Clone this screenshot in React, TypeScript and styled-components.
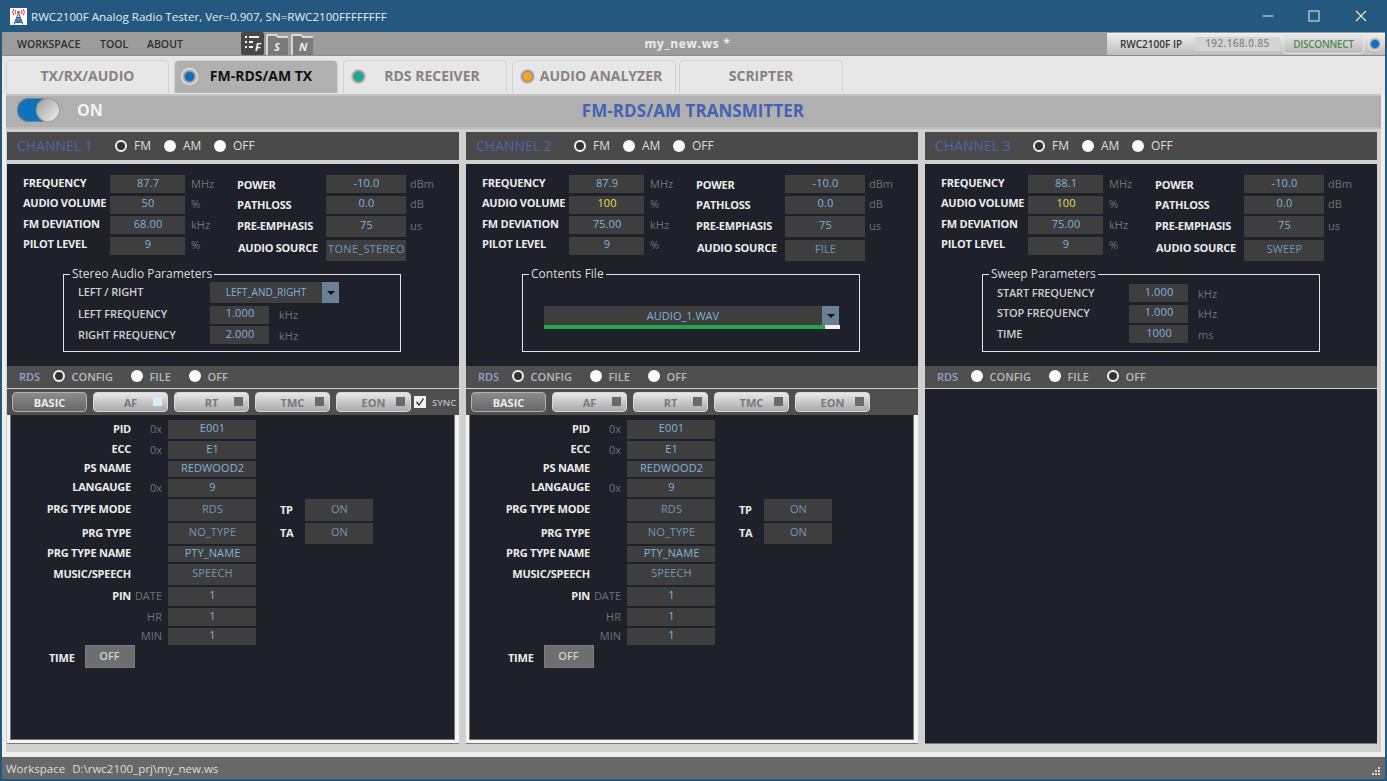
import React from "react";
import styled, { createGlobalStyle } from "styled-components";

const Global = createGlobalStyle`
  html, body { margin: 0; padding: 0; height: 100%; overflow: hidden; background: #d0d0ce; }
  #root { height: 100%; }
  * { box-sizing: border-box; }
  body { font-family: "Open Sans", "Noto Sans", "Liberation Sans", sans-serif; }
`;

const Win = styled.div`
  width: 1387px; height: 781px; display: flex; flex-direction: column; background: #24587f;
  padding: 0 2px 2px 2px;
`;
const TitleBar = styled.header`
  height: 32px; flex: none; display: flex; align-items: center; padding-left: 8px; color: #e4ebf1;
  font-size: 11.6px;
`;
const TitleText = styled.span` margin-left: 4px; white-space: nowrap; `;
const WinControls = styled.div` margin-left: auto; display: flex; padding-right: 1px; `;
const WinControl = styled.span`
  width: 46.5px; height: 32px; display: flex; align-items: center; justify-content: center;
`;

const MenuBar = styled.nav`
  height: 24px; flex: none; display: grid; grid-template-columns: 1fr auto 1fr; align-items: stretch;
  background: #9c9c9c; border-bottom: 1px solid #8c8c8c;
`;
const MenuLeft = styled.div` display: flex; align-items: center; padding-left: 15px; `;
const MenuItem = styled.span<{ $w: number }>`
  width: ${p => p.$w}px; font-size: 10.5px; color: #2e2e2e; font-weight: 600; white-space: nowrap;
`;
const ToolIcons = styled.div` display: flex; gap: 2px; margin-left: 47px; height: 23px; `;
const FileName = styled.div`
  align-self: center; color: #ececec; font-size: 12px; font-weight: 700; margin-right: 12px; white-space: nowrap; letter-spacing: 0.7px;
`;
const MenuRight = styled.div`
  justify-self: end; display: flex; align-items: center; width: 278px; height: 22px; margin-top: 1px; padding-left: 0;
  background: linear-gradient(#efefef, #bdbdbd);
`;
const IpLabel = styled.span`
  width: 88px; text-align: center; font-size: 10px; font-weight: 600; color: #333; white-space: nowrap;
`;
const IpValue = styled.span`
  width: 85px; height: 14px; line-height: 13px; background: #d4d4d4; color: #888; font-size: 10px; font-weight: 600; text-align: center; letter-spacing: 0.4px;
`;
const Disconnect = styled.button`
  width: 81px; height: 20px; margin-left: 3px; border: 1px solid #e4e4e4; border-radius: 4px; padding: 0;
  background: linear-gradient(#e6e6e6, #bcbcbc); color: #4f8a4f; font: 600 10px "Open Sans", sans-serif; letter-spacing: -0.3px;
`;
const Led = styled.span`
  width: 14px; height: 14px; margin-left: 4px; border-radius: 50%; flex: none;
  background: radial-gradient(circle, #0f6fc0 0 3.6px, #9a9a9a 4.2px, #f0f0f0 7px);
`;

const TabStrip = styled.div`
  height: 38px; flex: none; display: flex; padding: 4px 0 0 4px; background: #e6e7e6;
`;
const Tab = styled.div<{ $active?: boolean; $w: number; $offset?: number; $gap?: number }>`
  position: relative; width: ${p => p.$w}px; height: 33px; margin-right: ${p => p.$gap ?? 5}px;
  border: 1px solid #d2d2d2; border-bottom: none; border-radius: 5px 5px 0 0;
  background: ${p => (p.$active ? "#b0b0b0" : "#e6e7e6")};
  color: ${p => (p.$active ? "#111" : "#888380")};
  font-size: 14px; font-weight: 700; display: flex; align-items: center; justify-content: center;
  padding: 0 0 3px ${p => p.$offset ?? 0}px; white-space: nowrap;
`;
const TabDot = styled.span<{ $c: string }>`
  position: absolute; left: 6px; top: 7px; width: 17px; height: 17px; border-radius: 50%;
  background: radial-gradient(circle, ${p => p.$c} 0 4.2px, #8e8e8e 5px, #f4f4f4 8.5px);
`;

const Content = styled.main`
  flex: 1; min-height: 0; display: flex; flex-direction: column; background: #d0d0ce;
  padding: 0 4px 0 4px; border-left: 0; box-shadow: inset 4px 0 0 #eeeeec, inset -4px 0 0 #eeeeec;
`;
const HeaderBar = styled.div`
  height: 35px; flex: none; display: grid; grid-template-columns: 1fr auto 1fr; align-items: center;
  background: #b0b0b0; border-top: 2px solid #c4c4c4; border-bottom: 2px solid #bcbcbc; padding: 0 0 3px 11px;
`;
const ToggleWrap = styled.div` display: flex; align-items: center; `;
const Toggle = styled.div`
  width: 43px; height: 24px; border-radius: 12px; background: #0f72bd; box-shadow: inset 0 0 0 1px #7f7f7f; display: flex; justify-content: flex-end;
`;
const Knob = styled.span`
  width: 24px; height: 24px; border-radius: 50%; background: linear-gradient(135deg, #9a9a9a, #f4f4f4); box-shadow: 0 0 0 1px #9a9a9a inset;
`;
const ToggleLabel = styled.span` margin-left: 17px; font-size: 16px; font-weight: 700; color: #f4f4f4; `;
const PageTitle = styled.h1`
  margin: 0 12px 0 0; font-size: 17px; font-weight: 700; color: #4463b4; letter-spacing: 0.05px; white-space: nowrap;
`;

const Columns = styled.div`
  flex: 1; min-height: 0; display: grid; grid-template-columns: repeat(3, 452px); gap: 7px; padding: 3px 0 0 1px;
`;
const Column = styled.section`
  display: flex; flex-direction: column; background: #1e2129; border-bottom: 1px solid #777; height: 612px;
`;
const ChannelHead = styled.div`
  height: 28px; flex: none; display: flex; align-items: center; background: #4a4a4a; padding: 0 0 1px 10px;
`;
const ChannelName = styled.span`
  width: 98px; color: #4a66ad; font-size: 14px; white-space: nowrap;
`;
const HeadRule = styled.div` height: 4px; flex: none; background: #d0d0ce; `;
const Option = styled.label<{ $w: number }>`
  width: ${p => p.$w}px; display: flex; align-items: center; gap: 7px; color: #dedede; font-size: 12px; white-space: nowrap;
`;
const Radio = styled.span<{ $on?: boolean }>`
  width: 12px; height: 12px; border-radius: 50%; flex: none;
  background: ${p => (p.$on ? "#333" : "#fafafa")};
  border: ${p => (p.$on ? "2px solid #f2f2f2" : "none")};
`;

const Settings = styled.div`
  height: 202px; flex: none; display: flex; flex-direction: column; padding-top: 11px;
`;
const TopGrids = styled.div` display: flex; height: 92px; padding-left: 16px; `;
const LeftGrid = styled.div`
  width: 214px; display: grid; grid-template-columns: 87px 75px 1fr; grid-auto-rows: 18px; row-gap: 2.5px; align-items: center;
`;
const RightGrid = styled.div`
  display: grid; grid-template-columns: 89px 80px 1fr; grid-template-rows: 18px 18px 21px 21px; row-gap: 2.5px; align-items: center;
`;
const Label = styled.span<{ $dx?: number; $dy?: number }>`
  font-size: 11px; font-weight: 700; color: #ececec; white-space: nowrap; letter-spacing: -0.25px;
  margin-left: ${p => p.$dx ?? 0}px; position: relative; top: ${p => p.$dy ?? 0}px;
`;
const Value = styled.span<{ $tone?: "normal" | "dim" | "yellow"; $wide?: boolean }>`
  height: 100%; display: flex; align-items: center; justify-content: center; background: #3e3e3e; padding: 0 0 4px 1px;
  font-size: 11px; letter-spacing: ${p => (p.$wide ? "0.3px" : "0.1px")}; white-space: nowrap; overflow: hidden;
  color: ${p => (p.$tone === "yellow" ? "#e6d95e" : p.$tone === "dim" ? "#6f97b4" : "#7fb3da")};
`;
const Unit = styled.span`
  font-size: 11px; color: #6e7276; margin-left: 6px; white-space: nowrap; position: relative; top: -1px;
`;
const PowerUnit = styled(Unit)` margin-left: 4px; `;

const Group = styled.fieldset<{ $x: number }>`
  width: 338px; height: 85px; margin: 0 0 0 ${p => p.$x}px; padding: 0 0 0 14px; border: 1px solid #e4e4e4; min-inline-size: 0;
`;
const GroupTitle = styled.legend`
  margin-left: -8px; padding: 0 2px; font-size: 12px; line-height: 14px; color: #dcdcdc; white-space: nowrap;
`;
const GroupGrid = styled.div<{ $rows: string; $top: number }>`
  display: grid; grid-template-columns: 132px 59px 1fr; grid-template-rows: ${p => p.$rows}; row-gap: 2.5px; align-items: center; margin-top: ${p => p.$top}px;
`;
const GroupLabel = styled.span` font-size: 11px; font-weight: 600; color: #cfcfcf; white-space: nowrap; letter-spacing: -0.15px; position: relative; top: -1px; `;
const GroupUnit = styled(Unit)` margin-left: 10px; top: 0; `;
const Combo = styled.div<{ $w: number }>`
  width: ${p => p.$w}px; height: 100%; display: flex; background: #3e3e3e;
`;
const ComboText = styled.span<{ $size: number }>`
  flex: 1; display: flex; align-items: center; justify-content: center; color: #7fb3da; font-size: ${p => p.$size}px; padding-bottom: 1px; white-space: nowrap;
`;
const ComboArrow = styled.span`
  width: 17px; flex: none; background: #6a8096; display: flex; align-items: center; justify-content: center;
  &::after { content: ""; border: 4px solid transparent; border-top: 4px solid #111; border-bottom: none; }
`;
const FileWrap = styled.div` margin: 25px 0 0 7px; width: 296px; `;
const FileCombo = styled(Combo)` height: 19px; `;
const Track = styled.div` height: 4px; background: #f0f0f0; `;
const Fill = styled.div` height: 100%; background: #22a84a; `;

const RdsBar = styled.div`
  height: 23px; flex: none; display: flex; align-items: center; padding: 0 0 2px 12px; background: #4f4f4f; border-bottom: 1px solid #cfcfcf;
`;
const RdsName = styled.span` width: 34px; color: #8fa3c9; font-size: 11px; font-weight: 600; `;
const RdsOption = styled(Option)` font-size: 11px; color: #b8b8b8; font-weight: 600; gap: 6.5px; `;

const SubBar = styled.div`
  height: 26px; flex: none; display: flex; align-items: center; gap: 6px; padding: 0 0 0 5px; background: #4f4f4f;
`;
const SubTab = styled.button<{ $active?: boolean }>`
  position: relative; width: 75px; height: 20px; padding: 0; border-radius: 4px; border: 1px solid ${p => (p.$active ? "#b0b0b0" : "#d8d8d8")};
  background: ${p => (p.$active ? "linear-gradient(#8c8c8c, #666)" : "linear-gradient(#e8e8e8, #a8a8a8)")};
  color: ${p => (p.$active ? "#ececec" : "#7a7a7a")}; font: 700 11px "Open Sans", sans-serif;
`;
const SubLamp = styled.span<{ $on?: boolean }>`
  position: absolute; right: 5px; top: 4px; width: 9px; height: 9px; background: ${p => (p.$on ? "#d8ecf4" : "#6a6a6a")};
`;
const Sync = styled.label`
  display: flex; align-items: center; gap: 6px; margin-left: -3px; color: #b8b8b8; font-size: 9.5px; font-weight: 600;
`;
const SyncBox = styled.span`
  width: 12px; height: 12px; background: #f2f2f2; display: flex; align-items: center; justify-content: center;
`;

const RdsPanel = styled.div`
  flex: 1; min-height: 0; margin-bottom: 0; border-style: solid; border-color: #f4f4f4; border-width: 0 4px 3px 3px;
  display: flex; flex-direction: column;
`;
const RdsInner = styled.div`
  flex: 1; background: #1e2129; border: 1px solid #777; border-top: none; padding-top: 5px; display: flex; flex-direction: column;
`;
const RdsGrid = styled.div`
  display: grid; grid-template-columns: 120px 37px 88px 24px 25px 68px;
  grid-template-rows: 19px 18px 16px 18px 22px 21px 16px 21px 19px 18px 17px; row-gap: 2px; align-items: center;
`;
const RdsLabel = styled.span`
  grid-column: 1; font-size: 11px; font-weight: 700; color: #ececec; text-align: right; white-space: nowrap; letter-spacing: -0.25px;
  position: relative; top: -1.5px;
`;
const Prefix = styled.span` grid-column: 2; font-size: 11px; color: #6e7276; text-align: right; padding-right: 6px; position: relative; top: -1px; `;
const RdsValue = styled(Value)` grid-column: 3; `;
const SideLabel = styled(Label)` grid-column: 5; `;
const SideValue = styled(Value)` grid-column: 6; `;
const TimeRow = styled.div` display: flex; align-items: center; height: 23px; padding-left: 38px; `;
const TimeBtn = styled.span`
  width: 50px; height: 23px; margin-left: 10px; background: #6e6e6e; color: #d0d0d0; font-size: 11px; font-weight: 600;
  display: flex; align-items: center; justify-content: center; padding-bottom: 3px; border: 1px solid #7a7a7a;
`;
const ContentFoot = styled.div`
  height: 13px; flex: none; background: linear-gradient(#d0d0ce 0 8px, #eeeeec 8px);
`;
const StatusBar = styled.footer`
  height: 22px; flex: none; background: #686868; color: #dcdcdc; font-size: 11.5px; display: flex; align-items: center; padding: 0 4px 0 4px;
`;
const StatusPath = styled.span` margin-left: 7px; `;
const Grip = styled.svg` margin-left: auto; margin-top: 8px; `;

const Logo = () => (
  <svg width="17" height="17" viewBox="0 0 17 17">
    <rect width="17" height="17" fill="#fff" />
    <path d="M8.5 5 L4 16.5 M8.5 5 L13 16.5 M6.8 9.5h3.4 M5.8 12h5.4 M4.8 14.5h7.4 M6.8 9.5 L11.2 12 M10.2 9.5 L5.8 12 M5.8 12 L12.2 14.5 M11.2 12 L4.8 14.5" stroke="#2f5f9a" strokeWidth="1" fill="none" />
    <circle cx="8.5" cy="4.2" r="1.3" fill="#d33" />
    <path d="M5.6 2.2a4 4 0 0 0 0 4 M11.4 2.2a4 4 0 0 1 0 4 M3.6 1a6.5 6.5 0 0 0 0 6.4 M13.4 1a6.5 6.5 0 0 1 0 6.4" stroke="#d33" strokeWidth="1" fill="none" />
  </svg>
);

const ListIcon = () => (
  <svg width="23" height="23" viewBox="0 0 23 23">
    <rect width="23" height="23" rx="2" fill="#474747" />
    <path d="M4 5h2M8 5h10M4 10h2M8 10h4M4 15h2M8 15h4" stroke="#f0f0f0" strokeWidth="2" fill="none" />
    <text x="14" y="19" fontSize="11" fontWeight="700" fontStyle="italic" fontFamily="Open Sans" fill="#f4f4f4">F</text>
  </svg>
);
const FolderIcon = ({ letter }: { letter: string }) => (
  <svg width="23" height="23" viewBox="0 0 23 23">
    <path d="M1 23V3h9l2 2h10v18z" fill="#7a7a7a" />
    <path d="M1 23V3M1 3h9l2 2h10" stroke="#f4f4f4" strokeWidth="1.4" fill="none" />
    <text x="8" y="19" fontSize="11" fontWeight="700" fontStyle="italic" fontFamily="Open Sans" fill="#ececec">{letter}</text>
  </svg>
);

type Ch = {
  name: string; freq: string; vol: string; volYellow?: boolean; dev: string; source: string; sourceWide?: boolean;
  mode: "stereo" | "file" | "sweep"; groupX: number; rds: "config" | "off"; sync?: boolean; afOn?: boolean;
};

const channels: Ch[] = [
  { name: "CHANNEL 1", freq: "87.7", vol: "50", dev: "68.00", source: "TONE_STEREO", sourceWide: true, mode: "stereo", groupX: 56, rds: "config", sync: true, afOn: true },
  { name: "CHANNEL 2", freq: "87.9", vol: "100", volYellow: true, dev: "75.00", source: "FILE", mode: "file", groupX: 56, rds: "config" },
  { name: "CHANNEL 3", freq: "88.1", vol: "100", volYellow: true, dev: "75.00", source: "SWEEP", mode: "sweep", groupX: 57, rds: "off" },
];

const rdsRows: { label?: string; prefix?: string; value: string; dim?: boolean; side?: [string, string] }[] = [
  { label: "PID", prefix: "0x", value: "E001" },
  { label: "ECC", prefix: "0x", value: "E1" },
  { label: "PS NAME", value: "REDWOOD2" },
  { label: "LANGAUGE", prefix: "0x", value: "9" },
  { label: "PRG TYPE MODE", value: "RDS", dim: true, side: ["TP", "ON"] },
  { label: "PRG TYPE", value: "NO_TYPE", dim: true, side: ["TA", "ON"] },
  { label: "PRG TYPE NAME", value: "PTY_NAME" },
  { label: "MUSIC/SPEECH", value: "SPEECH", dim: true },
  { label: "PIN", prefix: "DATE", value: "1" },
  { prefix: "HR", value: "1" },
  { prefix: "MIN", value: "1" },
];

const Mode = ({ ch }: { ch: Ch }) => {
  if (ch.mode === "stereo") {
    return (
      <Group $x={ch.groupX}>
        <GroupTitle>Stereo Audio Parameters</GroupTitle>
        <GroupGrid $rows="21px 18px 18px" $top={1}>
          <GroupLabel>LEFT / RIGHT</GroupLabel>
          <Combo $w={129}><ComboText $size={10}>LEFT_AND_RIGHT</ComboText><ComboArrow /></Combo>
          <span />
          <GroupLabel>LEFT FREQUENCY</GroupLabel><Value>1.000</Value><GroupUnit>kHz</GroupUnit>
          <GroupLabel>RIGHT FREQUENCY</GroupLabel><Value>2.000</Value><GroupUnit>kHz</GroupUnit>
        </GroupGrid>
      </Group>
    );
  }
  if (ch.mode === "file") {
    return (
      <Group $x={ch.groupX}>
        <GroupTitle>Contents File</GroupTitle>
        <FileWrap>
          <FileCombo $w={295}><ComboText $size={11}>AUDIO_1.WAV</ComboText><ComboArrow /></FileCombo>
          <Track><Fill style={{ width: `${(281 / 296) * 100}%` }} /></Track>
        </FileWrap>
      </Group>
    );
  }
  return (
    <Group $x={ch.groupX}>
      <GroupTitle>Sweep Parameters</GroupTitle>
      <GroupGrid $rows="18px 18px 18px" $top={3}>
        <GroupLabel>START FREQUENCY</GroupLabel><Value>1.000</Value><GroupUnit>kHz</GroupUnit>
        <GroupLabel>STOP FREQUENCY</GroupLabel><Value>1.000</Value><GroupUnit>kHz</GroupUnit>
        <GroupLabel>TIME</GroupLabel><Value>1000</Value><GroupUnit>ms</GroupUnit>
      </GroupGrid>
    </Group>
  );
};

const RdsForm = () => (
  <RdsPanel>
    <RdsInner>
      <RdsGrid>
        {rdsRows.map((r, i) => (
          <React.Fragment key={i}>
            <RdsLabel style={{ gridRow: i + 1 }}>{r.label}</RdsLabel>
            {r.prefix && <Prefix style={{ gridRow: i + 1 }}>{r.prefix}</Prefix>}
            <RdsValue style={{ gridRow: i + 1 }} $tone={r.dim ? "dim" : "normal"}>{r.value}</RdsValue>
            {r.side && <SideLabel $dy={-1} style={{ gridRow: i + 1 }}>{r.side[0]}</SideLabel>}
            {r.side && <SideValue style={{ gridRow: i + 1 }} $tone="dim">{r.side[1]}</SideValue>}
          </React.Fragment>
        ))}
      </RdsGrid>
      <TimeRow>
        <Label $dy={1}>TIME</Label>
        <TimeBtn>OFF</TimeBtn>
      </TimeRow>
    </RdsInner>
  </RdsPanel>
);

const Channel = ({ ch }: { ch: Ch }) => (
  <Column>
    <ChannelHead>
      <ChannelName>{ch.name}</ChannelName>
      <Option $w={49}><Radio $on />FM</Option>
      <Option $w={50}><Radio />AM</Option>
      <Option $w={60}><Radio />OFF</Option>
    </ChannelHead>
    <HeadRule />
    <Settings>
      <TopGrids>
        <LeftGrid>
          <Label $dy={-2}>FREQUENCY</Label><Value>{ch.freq}</Value><Unit>MHz</Unit>
          <Label $dy={-2}>AUDIO VOLUME</Label><Value $tone={ch.volYellow ? "yellow" : "normal"}>{ch.vol}</Value><Unit>%</Unit>
          <Label $dy={-2}>FM DEVIATION</Label><Value>{ch.dev}</Value><Unit>kHz</Unit>
          <Label $dy={-2}>PILOT LEVEL</Label><Value>9</Value><Unit>%</Unit>
        </LeftGrid>
        <RightGrid>
          <Label>POWER</Label><Value>-10.0</Value><PowerUnit>dBm</PowerUnit>
          <Label>PATHLOSS</Label><Value>0.0</Value><PowerUnit>dB</PowerUnit>
          <Label $dy={-1}>PRE-EMPHASIS</Label><Value>75</Value><PowerUnit>us</PowerUnit>
          <Label $dx={1} $dy={-3}>AUDIO SOURCE</Label><Value $wide={ch.sourceWide} $tone="dim">{ch.source}</Value><span />
        </RightGrid>
      </TopGrids>
      <Mode ch={ch} />
    </Settings>
    <RdsBar>
      <RdsName>RDS</RdsName>
      <RdsOption $w={78}><Radio $on={ch.rds === "config"} />CONFIG</RdsOption>
      <RdsOption $w={58}><Radio />FILE</RdsOption>
      <RdsOption $w={60}><Radio $on={ch.rds === "off"} />OFF</RdsOption>
    </RdsBar>
    {ch.rds === "config" && (
      <>
        <SubBar>
          <SubTab $active>BASIC</SubTab>
          <SubTab>AF<SubLamp $on={ch.afOn} /></SubTab>
          <SubTab>RT<SubLamp /></SubTab>
          <SubTab>TMC<SubLamp /></SubTab>
          <SubTab>EON<SubLamp /></SubTab>
          {ch.sync && (
            <Sync>
              <SyncBox>
                <svg width="10" height="10" viewBox="0 0 10 10"><path d="M1.5 5l2.5 3L8.5 1.5" stroke="#222" strokeWidth="1.3" fill="none" /></svg>
              </SyncBox>
              SYNC
            </Sync>
          )}
        </SubBar>
        <RdsForm />
      </>
    )}
  </Column>
);

export default function App() {
  return (
    <>
      <Global />
      <Win>
        <TitleBar>
          <Logo />
          <TitleText>RWC2100F Analog Radio Tester, Ver=0.907, SN=RWC2100FFFFFFFF</TitleText>
          <WinControls>
            <WinControl><svg width="12" height="12" viewBox="0 0 12 12"><path d="M0.5 6h11" stroke="#e8eef3" strokeWidth="1" /></svg></WinControl>
            <WinControl><svg width="12" height="12" viewBox="0 0 12 12"><rect x="1" y="1" width="10" height="10" stroke="#e8eef3" strokeWidth="1" fill="none" /></svg></WinControl>
            <WinControl><svg width="12" height="12" viewBox="0 0 12 12"><path d="M1 1l10 10M11 1L1 11" stroke="#e8eef3" strokeWidth="1.1" /></svg></WinControl>
          </WinControls>
        </TitleBar>
        <MenuBar>
          <MenuLeft>
            <MenuItem $w={83}>WORKSPACE</MenuItem>
            <MenuItem $w={47}>TOOL</MenuItem>
            <MenuItem $w={47}>ABOUT</MenuItem>
            <ToolIcons>
              <ListIcon />
              <FolderIcon letter="S" />
              <FolderIcon letter="N" />
            </ToolIcons>
          </MenuLeft>
          <FileName>my_new.ws *</FileName>
          <MenuRight>
            <IpLabel>RWC2100F IP</IpLabel>
            <IpValue>192.168.0.85</IpValue>
            <Disconnect>DISCONNECT</Disconnect>
            <Led />
          </MenuRight>
        </MenuBar>
        <TabStrip>
          <Tab $w={163}>TX/RX/AUDIO</Tab>
          <Tab $w={164} $active $offset={10}><TabDot $c="#0f6fc0" />FM-RDS/AM TX</Tab>
          <Tab $w={164} $offset={14}><TabDot $c="#17ab96" />RDS RECEIVER</Tab>
          <Tab $w={164} $offset={14} $gap={3}><TabDot $c="#f7a428" />AUDIO ANALYZER</Tab>
          <Tab $w={164}>SCRIPTER</Tab>
        </TabStrip>
        <Content>
          <HeaderBar>
            <ToggleWrap>
              <Toggle><Knob /></Toggle>
              <ToggleLabel>ON</ToggleLabel>
            </ToggleWrap>
            <PageTitle>FM-RDS/AM TRANSMITTER</PageTitle>
            <span />
          </HeaderBar>
          <Columns>
            {channels.map(c => <Channel key={c.name} ch={c} />)}
          </Columns>
          <ContentFoot />
        </Content>
        <StatusBar>
          Workspace
          <StatusPath>D:\rwc2100_prj\my_new.ws</StatusPath>
          <Grip width="12" height="12" viewBox="0 0 12 12">
            <g fill="#d8d8d8">
              <rect x="9" y="1" width="2" height="2" /><rect x="6" y="4" width="2" height="2" /><rect x="9" y="4" width="2" height="2" />
              <rect x="3" y="7" width="2" height="2" /><rect x="6" y="7" width="2" height="2" /><rect x="9" y="7" width="2" height="2" />
            </g>
          </Grip>
        </StatusBar>
      </Win>
    </>
  );
}
